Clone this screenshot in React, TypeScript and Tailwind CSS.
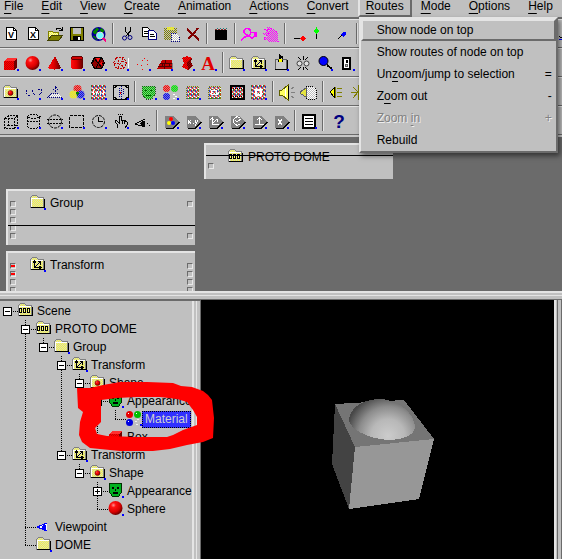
import React from "react";

const BLACK = "#000";
const NAVY = "#000080";

/* ---------- shared dither patterns ---------- */

function Dither({ id, a, b }: { id: string; a: string; b: string }) {
  return (
    <pattern id={id} width="2" height="2" patternUnits="userSpaceOnUse">
      <rect width="2" height="2" fill={a} />
      <rect width="1" height="1" fill={b} />
      <rect x="1" y="1" width="1" height="1" fill={b} />
    </pattern>
  );
}

function SharedDefs() {
  return (
    <svg width="0" height="0" className="absolute" aria-hidden="true">
      <defs>
        <Dither id="yw" a="#ffff30" b="#f0f0d0" />
        <Dither id="folder" a="#f8f840" b="#d8d8c0" />
        <Dither id="red" a="#ff0000" b="#c80000" />
        <Dither id="dred" a="#a00000" b="#600000" />
        <Dither id="redg" a="#ff0000" b="#d08080" />
        <Dither id="greeng" a="#00ff00" b="#70b070" />
        <Dither id="blueg" a="#0000ff" b="#8080c0" />
        <Dither id="yelg" a="#ffff00" b="#c8c880" />
        <Dither id="navyg" a="#000080" b="#c0c0c0" />
        <Dither id="magg" a="#ff00ff" b="#c0c0c0" />
        <Dither id="oliveg" a="#808000" b="#c0c0c0" />
        <Dither id="whiteg" a="#ffffff" b="#c0c0c0" />
        <Dither id="mask" a="#10a010" b="#70e070" />
        <pattern id="noise" width="4" height="4" patternUnits="userSpaceOnUse">
          <rect width="4" height="4" fill="#b8a8a8" />
          <rect width="1" height="2" fill="#f02020" />
          <rect x="1" y="1" width="1" height="2" fill="#2040c0" />
          <rect x="2" y="2" width="1" height="2" fill="#f03030" />
          <rect x="3" width="1" height="2" fill="#208040" />
          <rect x="2" width="1" height="1" fill="#ffffff" />
          <rect y="3" width="1" height="1" fill="#ffffff" />
        </pattern>
        <radialGradient id="ball" cx="0.35" cy="0.3" r="0.7">
          <stop offset="0" stopColor="#ff9090" />
          <stop offset="0.25" stopColor="#ff1010" />
          <stop offset="0.7" stopColor="#d80000" />
          <stop offset="1" stopColor="#700000" />
        </radialGradient>
        <linearGradient id="cyl" x1="0" x2="1" y1="0" y2="0">
          <stop offset="0" stopColor="#ff1010" />
          <stop offset="0.45" stopColor="#e00000" />
          <stop offset="1" stopColor="#600000" />
        </linearGradient>
      </defs>
    </svg>
  );
}

/* ---------- icon drawings, all on a 22 x 22 grid ---------- */

const dot = <rect x="17" y="17" width="2" height="2" fill="#0000ff" />;

function glyph(x: number, y: number, size: number, text: string, fill: string, serif = false) {
  return (
    <text
      x={x}
      y={y}
      fontSize={size}
      fontWeight="bold"
      textAnchor="middle"
      fill={fill}
      fontFamily={serif ? "Liberation Serif, serif" : "Liberation Sans, sans-serif"}
    >
      {text}
    </text>
  );
}

function page(letter: string) {
  return (
    <>
      <path d="M6.5 4.5H13.5L16.5 7.5V16.5H6.5Z" fill="#fff" stroke={BLACK} />
      <path d="M13.5 4.5V7.5H16.5" fill="none" stroke={BLACK} />
      {glyph(11, 15, 9, letter, BLACK)}
    </>
  );
}

function folder(inner?: React.ReactNode) {
  return (
    <>
      <path d="M3.5 16.5V6.5L5.5 4.5H9.5L11.5 6.5H16.5V16.5Z" fill="url(#folder)" stroke="#808080" />
      <path d="M4.500 16V7.500H16" stroke="#fff" fill="none" />
      <path d="M4 16.500H17.500V8" stroke={BLACK} fill="none" />
      {inner}
    </>
  );
}

const axes = (
  <path
    d="M7.5 8V14.5H14M6 9.5L7.5 7.5L9 9.5M12 13L14.5 14.5L12 16M8 14L13 9M10.5 8.5H13.5V11.5"
    stroke={BLACK}
    fill="none"
  />
);

const eggs = (
  <path
    d="M4.500 9.500H6.500V13.500H4.500ZM8.500 9.500H10.500V13.500H8.500ZM12.500 9.500H14.500V13.500H12.500Z"
    fill="#ffff80"
    stroke={BLACK}
  />
);

function tag(inner: React.ReactNode) {
  return (
    <>
      <path d="M5 6H13L19 12L13 18H5Z" fill="#808080" />
      <path d="M6 18.500H13L19.500 12" stroke={BLACK} fill="none" />
      {inner}
      {dot}
    </>
  );
}

const icons: Record<string, React.ReactNode> = {
  newV: page("V"),
  newX: page("X"),
  open: (
    <>
      <path d="M4.500 16.500V8.500H8.500L9.500 9.500H14.500V12" fill="url(#yw)" stroke="#808000" />
      <path d="M4 17L8 12H19L15 17Z" fill="#808000" stroke="#404000" />
      <path d="M12 6.500C14 4.500 16 4.500 18 7M18.500 4V7.500H15" stroke={BLACK} fill="none" />
    </>
  ),
  save: (
    <>
      <rect x="4.500" y="4.500" width="13" height="13" fill="#808000" stroke={BLACK} />
      <rect x="7" y="5" width="8" height="6" fill="#c0c0c0" />
      <rect x="7" y="13" width="8" height="4" fill={BLACK} />
      <rect x="12" y="14" width="2" height="3" fill="#fff" />
    </>
  ),
  globe: (
    <>
      <circle cx="10.500" cy="11" r="7" fill="#000090" />
      <path d="M5 9L8 5L11 6L9 9L7 12ZM13 5L16 8L15 10L12 8ZM5 13L8 14L9 17L6 15Z" fill="#008000" />
      <circle cx="12" cy="12.500" r="3.500" fill="#70ffff" stroke="#e0e0e0" />
      <path d="M14.500 15L18 18" stroke="#ff0080" strokeWidth="2" />
    </>
  ),
  cut: (
    <>
      <path d="M9.500 4V8L13 13M14.500 4V8L10 13" stroke={BLACK} fill="none" />
      <circle cx="8.500" cy="15" r="2" stroke={NAVY} fill="none" />
      <circle cx="14" cy="14.500" r="2" stroke={NAVY} fill="none" />
    </>
  ),
  copy: (
    <>
      <path d="M4.500 4.500H9.500L12.500 7.500V13.500H4.500Z" fill="#fff" stroke={BLACK} />
      <path d="M6 8.500H10M6 10.500H10" stroke={BLACK} />
      <path d="M10.500 7.500H15.500L18.500 10.500V16.500H10.500Z" fill="#fff" stroke={NAVY} />
      <path d="M12 11.500H16M12 13.500H17" stroke={BLACK} />
    </>
  ),
  paste: (
    <>
      <rect x="4" y="5" width="13" height="12" fill="url(#oliveg)" />
      <rect x="7" y="4" width="7" height="3" fill="url(#yelg)" />
      <path d="M11 10H16L19 13V18H11Z" fill="url(#whiteg)" stroke="url(#navyg)" />
    </>
  ),
  remove: <path d="M5 6L17 17M16 5L12 10L6 16" stroke="#800000" strokeWidth="2" fill="none" />,
  clapper: (
    <>
      <rect x="5" y="7" width="12" height="10" fill={BLACK} />
      <path d="M5 6.500H17" stroke="#803030" strokeDasharray="2 1" />
      <path d="M7 5.500H17" stroke="#208080" strokeDasharray="1 2" />
    </>
  ),
  route: (
    <path
      d="M3 17L7 14C12 13 14 10 12 7C10 4 5 6 6 9C7 12 12 13 14 15C16 15 17 12 17 9M14 9.500H18V14"
      stroke="#ff00ff"
      strokeWidth="1.500"
      fill="none"
    />
  ),
  hand: (
    <path
      d="M7 4L13 6L17 9L18 18H8L4 16V14H9L3 11V10L9 11L4 7L5 6L10 9L7 5Z"
      fill="url(#magg)"
      stroke="#ff00ff"
      strokeDasharray="1 1"
    />
  ),
  arrowRed: (
    <>
      <path d="M6 15.500H13" stroke={BLACK} />
      <path d="M12 15.500L15 13L18 15.500L15 18Z" fill="#ff0000" />
    </>
  ),
  arrowGreen: (
    <>
      <path d="M6.500 9V16" stroke={BLACK} />
      <path d="M6.500 4L9 8L6.500 11L4 8Z" fill="#00ff00" />
    </>
  ),
  arrowBlue: (
    <>
      <path d="M6 16L10 12" stroke={BLACK} />
      <path d="M9 12L11 9H14V12L11 14Z" fill="#0000ff" />
    </>
  ),
  cube: (
    <>
      <path d="M4 9L7 6H17L14 9Z" fill="#ff3030" />
      <rect x="4" y="9" width="10" height="9" fill="url(#red)" />
      <path d="M14 9L17 6V15L14 18Z" fill="#700000" />
      {dot}
    </>
  ),
  sphere: (
    <>
      <circle cx="10.500" cy="11" r="7" fill="url(#ball)" />
      {dot}
    </>
  ),
  cone: (
    <>
      <path d="M11 4L17 16C14 18 7 18 4 16Z" fill="url(#cyl)" />
      {dot}
    </>
  ),
  cylinder: (
    <>
      <path d="M5 6V16C7 18 15 18 17 16V6Z" fill="url(#cyl)" />
      <ellipse cx="11" cy="6" rx="6" ry="2" fill="#d00000" stroke="#600000" />
      {dot}
    </>
  ),
  ifs: (
    <>
      <path d="M3.500 11L6.500 5.500H13.500L16.500 11L13.500 16.500H6.500Z" fill="#900000" stroke={BLACK} />
      <path d="M6 6L14 16M13 6L8 16M6 8L4 11M13 12L16 11" stroke={BLACK} fill="none" />
      <path d="M8 6H12L10 10ZM12 11L14 14V9Z" fill="#ff1010" />
      {dot}
    </>
  ),
  ils: (
    <>
      <path
        d="M3.500 11L6.500 5.500H13.500L16.500 11L13.500 16.500H6.500ZM6 6L14 16M13 6L8 16M4 11L9 12M12 9L16 11"
        fill="none"
        stroke="#c00000"
        strokeDasharray="2 1"
      />
      <path d="M18.500 6V16" stroke="#fff" />
      {dot}
    </>
  ),
  points: (
    <>
      <path d="M5 12h1v1h-1zM10 8h1v1h-1zM15 8h1v1h-1zM9 13h1v1h-1zM15 12h1v1h-1zM10 17h1v1h-1zM12 6h1v1h-1z" fill="#ff0000" />
      {dot}
    </>
  ),
  wall: (
    <>
      <path d="M3 17L8 8H18V17Z" fill="#c00000" />
      <path d="M6 11.500H18M4 14.500H18M11.500 8L10 17M15.500 11V14M8 12V14" stroke="#500000" fill="none" />
      <path d="M18.500 11V17" stroke="#808080" />
      {dot}
    </>
  ),
  extrusion: (
    <>
      <path d="M6 6L11 4L16 6L15 10L17 14L12 18L6 15L8 11Z" fill="url(#red)" />
      <path d="M11 10L16 6L15 10L17 14L12 18Z" fill="url(#dred)" />
      {dot}
    </>
  ),
  text: (
    <>
      {glyph(10, 18, 19, "A", "#e00000", true)}
      {dot}
    </>
  ),
  folder: (
    <>
      {folder()}
      {dot}
    </>
  ),
  transform: (
    <>
      {folder(axes)}
      {dot}
    </>
  ),
  scene: folder(eggs),
  shape: (
    <>
      {folder(<circle cx="10.500" cy="12" r="2.500" fill="url(#ball)" stroke="#600000" strokeWidth="0.500" />)}
      {dot}
    </>
  ),
  anchor: (
    <>
      <path d="M5.500 17.500V7.500H16.500V17.500Z" fill="#c8c8c8" stroke="#606060" />
      <path d="M5 17.500H17.500V8" stroke={BLACK} fill="none" />
      <path d="M10 8V4L13 6M8 9H13" stroke={BLACK} fill="none" strokeWidth="2" />
      <path d="M9 7H12V10H9Z" fill="#ffff00" />
      {dot}
    </>
  ),
  billboard: (
    <>
      <circle cx="7.500" cy="11.500" r="2.500" stroke="#404040" fill="#e0e0e0" />
      <circle cx="14.500" cy="11.500" r="2.500" stroke="#404040" fill="#e0e0e0" />
      <path d="M6 5L9 8M11.500 4V8M16 5L13 8M6 18L9 15M11.500 15V18M16 18L13 15" stroke={BLACK} />
    </>
  ),
  magnifier: (
    <>
      <circle cx="9.500" cy="9" r="4.500" fill="#0000ff" stroke={BLACK} />
      <path d="M13 13L18 17" stroke={BLACK} strokeWidth="2" />
      {dot}
    </>
  ),
  switcher: (
    <>
      <rect x="7" y="6" width="7" height="11" fill="#fff" stroke={BLACK} strokeWidth="2" />
      <rect x="10" y="8" width="2" height="3" fill={BLACK} />
      <rect x="9.500" y="12.500" width="2" height="2" fill="#c0c0c0" stroke="#606060" />
      {dot}
    </>
  ),
  path: (
    <>
      <path d="M4 9V13M6 14H9M10 9L12 13L14 13M16 8H19V12L17 14" stroke={NAVY} strokeDasharray="2 1" fill="none" />
      {dot}
    </>
  ),
  normal: (
    <>
      <path d="M4 16L8 12H14L18 16Z" fill="url(#whiteg)" stroke="url(#navyg)" />
      <path d="M11.500 6V13M9 9L11.500 6L14 9" stroke={NAVY} fill="none" strokeDasharray="2 1" />
      {dot}
    </>
  ),
  colors: (
    <>
      <circle cx="11.500" cy="8" r="4" fill="url(#redg)" />
      <circle cx="7.500" cy="13.500" r="4" fill="url(#yelg)" />
      <circle cx="14.500" cy="13.500" r="4" fill="url(#blueg)" />
      <path d="M10 11H13L12 15H11Z" fill="#008000" />
      {dot}
    </>
  ),
  texcoord: (
    <>
      <rect x="3" y="4" width="15" height="15" fill="url(#noise)" />
      <path d="M5 9V14M8 14L10 10M12 10V14M15 9V14" stroke="#fff" />
      {dot}
    </>
  ),
  coordframe: (
    <>
      <rect x="3.500" y="4.500" width="15" height="14" fill="#c8c8c8" stroke={BLACK} />
      <path d="M4 7L7 5M18 7L15 5M4 16L7 18M18 16L15 18" stroke={BLACK} />
      <path d="M11.500 5V18M9.500 7V16M13.500 8V14" stroke={NAVY} strokeDasharray="1 1" />
      <rect x="10" y="11" width="1" height="2" fill="#ff0000" />
      {dot}
    </>
  ),
  mask: (
    <>
      <path d="M4 5H17V13L14 18H8L4 14Z" fill="url(#mask)" stroke="#205020" strokeDasharray="1 1" />
      <path d="M7 9H9M12 9H14M8 14H13" stroke="#006000" />
      {dot}
    </>
  ),
  material: (
    <>
      <circle cx="6.500" cy="7.500" r="3.500" fill="url(#redg)" />
      <circle cx="14.500" cy="7.500" r="3.500" fill="url(#greeng)" />
      <circle cx="6.500" cy="15.500" r="3.500" fill="url(#blueg)" />
      <path d="M13 13.500H15M15 15.500H17M13 17.500H15" stroke="#fff" />
      {dot}
    </>
  ),
  image: (
    <>
      <rect x="4.500" y="5.500" width="12" height="12" fill="url(#noise)" stroke="#808000" strokeDasharray="1 1" />
      {dot}
    </>
  ),
  pixel: (
    <>
      <rect x="4.500" y="5.500" width="12" height="12" fill="url(#noise)" stroke="#808000" strokeDasharray="1 1" />
      <path d="M7 9.500H12V13.500H7ZM13 14L15 11" stroke="#fff" fill="none" />
    </>
  ),
  movie: (
    <>
      <rect x="5" y="5" width="13" height="13" fill="url(#noise)" stroke={BLACK} strokeWidth="2" />
      <path d="M5 7.500H17M5 15.500H17" stroke={BLACK} strokeDasharray="1 1" />
    </>
  ),
  textransform: (
    <>
      <rect x="3" y="4" width="15" height="15" fill="url(#noise)" />
      <path d="M8 8V14H14M9 9H13V13" stroke="#fff" fill="none" strokeWidth="2" />
      {dot}
    </>
  ),
  sound: (
    <>
      <path d="M3 9H6L12 4V19L6 14H3Z" fill="#ffff60" stroke="#606000" />
      <path d="M9.500 7V16" stroke="#fff" />
      <path d="M12.500 5V18" stroke={BLACK} />
      <path d="M15 8L18 6M15 11.500H19M15 15L18 17" stroke="#808080" />
    </>
  ),
  audio: (
    <>
      <path d="M8 5H15L18 8V18H9Z" fill="url(#whiteg)" stroke={BLACK} strokeDasharray="1 1" />
      <path d="M2 11L8 7V16L3 13Z" fill="url(#yelg)" stroke="#606060" />
    </>
  ),
  light: (
    <>
      <path d="M4 11L8 7V16Z" fill="#ffff00" stroke={BLACK} />
      <path d="M11 7.500H16M11 11.500H16M11 15.500H16M9.500 6V17" stroke="#808000" />
    </>
  ),
  pointlight: <path d="M3 11.500H10M5 6L10 11L5 17M10 4V19" stroke="#808000" fill="none" />,
  visibility: (
    <>
      <path
        d="M4.500 8.500H14.500V18.500H4.500ZM4.500 8.500L8.500 5.500H17.500L14.500 8.500M17.500 5.500V15L14.500 18M8.500 5V15H17M8 15L5 18"
        fill="none"
        stroke={BLACK}
        strokeDasharray="2 1"
      />
      {dot}
    </>
  ),
  cylSensor: (
    <>
      <path
        d="M5.500 7V16M17.500 7V16M5 6.500C8 4 15 4 18 6.500C15 9 8 9 5 6.500M5 10.500C8 12 15 12 18 10.500M5 16.500C8 19 15 19 18 16.500"
        fill="none"
        stroke={BLACK}
        strokeDasharray="2 1"
      />
      {dot}
    </>
  ),
  sphSensor: (
    <>
      <circle cx="11" cy="11.500" r="6.500" fill="none" stroke={BLACK} strokeDasharray="3 1" />
      <path d="M3 9.500H19M3 13.500H19" stroke={BLACK} strokeDasharray="2 1" />
      {dot}
    </>
  ),
  plane: (
    <>
      <rect x="3.500" y="5.500" width="14" height="12" fill="none" stroke={BLACK} strokeDasharray="3 1" />
      {dot}
    </>
  ),
  clock: (
    <>
      <circle cx="10.500" cy="11.500" r="6" fill="none" stroke={BLACK} strokeDasharray="3 1" />
      <path d="M10.500 7V11.500H15" stroke={BLACK} fill="none" />
      {dot}
    </>
  ),
  touch: (
    <>
      <path d="M7 18V14L5 12L6 10L9 13V6H11V11L14 10L17 12V15L15 18M12 11V14M14 11V14" fill="none" stroke={BLACK} />
      <path d="M8 5L10 4L13 5" stroke={BLACK} fill="none" strokeDasharray="1 1" />
      {dot}
    </>
  ),
  eye: (
    <>
      <path d="M3 14L13 9M3 14L13 17" stroke={BLACK} fill="none" />
      <path d="M10 11H13V16H10L8 14Z" fill={BLACK} />
      <path d="M15 13h1v1h-1zM17 15h1v1h-1z" fill={BLACK} />
    </>
  ),
  interpColor: tag(
    <>
      <circle cx="11" cy="9" r="2" fill="#ff0000" />
      <circle cx="9" cy="13" r="2" fill="#ffff00" />
      <circle cx="13" cy="13" r="2" fill="#0000ff" />
    </>,
  ),
  interpXy: tag(<path d="M6 10L9 14M9 10L6 14M11 14V13M13 10L14 13M16 10L13 16" stroke="#fff" fill="none" />),
  interpAxes: tag(<path d="M8.500 8V14.500H15M9 13L13 9M6 10L8.500 8L10 10M13 9V12" stroke="#fff" fill="none" />),
  interpRot: tag(<path d="M14 8A4 4 0 1 0 14 14M9 10L11 12L15 9" stroke="#fff" fill="none" />),
  interpNormal: tag(<path d="M7 14.500H16M11.500 14V8M9 10L11.500 8L14 10" stroke="#fff" fill="none" />),
  interpScalar: tag(<path d="M8 9L12 15M12 9L8 15" stroke="#fff" />),
  script: (
    <>
      <rect x="5" y="5" width="12" height="13" fill="#fff" stroke={BLACK} strokeWidth="2" />
      <path d="M7 8.500H15M7 11.500H15M7 14.500H15" stroke={BLACK} />
      {dot}
    </>
  ),
  help: glyph(13, 18, 19, "?", NAVY),
  treeMask: (
    <>
      <path d="M4.500 4.500H16.500V13L13.500 17.500H7.500L4.500 13Z" fill="#00b020" stroke="#003000" />
      <path d="M7 8H9V10H7ZM12 8H14V10H12ZM10 10H11V12H10ZM8 13H13V15H8Z" fill={BLACK} />
      {dot}
    </>
  ),
  treeMaterial: (
    <>
      <circle cx="6.500" cy="7.500" r="3.500" fill="#e80000" />
      <circle cx="14.500" cy="7.500" r="3.500" fill="#00c000" />
      <circle cx="6.500" cy="15.500" r="3.500" fill="#0000e0" />
      <path d="M5 6h1v1h-1zM13 6h1v1h-1zM5 14h1v1h-1z" fill="#fff" />
      <path d="M12 14.500H14M14 12.500H16M13 17.500H15" stroke="#f0f0f0" />
      {dot}
    </>
  ),
  viewpoint: (
    <>
      <path d="M4 12L14 8V16Z" fill="#fff" />
      <path d="M4 12L14 8M4 12L14 16" stroke="#0000ff" fill="none" />
      <path d="M10 10H13V15H10L9 12Z" fill="#0000ff" />
    </>
  ),
};

function Drawing({ name, className }: { name: string; className: string }) {
  return (
    <svg
      viewBox="0 0 22 22"
      className={"[&_circle]:[shape-rendering:auto] " + className}
      shapeRendering="crispEdges"
      aria-hidden="true"
    >
      {icons[name]}
    </svg>
  );
}

/* ---------- tool bars ---------- */

const toolbars: string[][] = [
  ["newV", "newX", "open", "save", "globe", "|", "cut", "copy", "paste", "remove", "|", "clapper", "|", "route", "hand", "|", "arrowRed", "arrowGreen", "arrowBlue", "|", "edge"],
  ["cube", "sphere", "cone", "cylinder", "ifs", "ils", "points", "wall", "extrusion", "text", "|", "folder", "transform", "anchor", "billboard", "magnifier", "switcher"],
  ["shape", "path", "normal", "colors", "texcoord", "coordframe", "|", "mask", "material", "image", "pixel", "movie", "textransform", "|", "sound", "audio", "|", "light", "pointlight"],
  ["visibility", "cylSensor", "sphSensor", "plane", "clock", "touch", "eye", "|", "interpColor", "interpXy", "interpAxes", "interpRot", "interpNormal", "interpScalar", "|", "script", "|", "help"],
];

function Toolbar({ items }: { items: string[] }) {
  return (
    <div role="toolbar" className="flex h-[29px] items-center overflow-hidden border-b border-t border-b-[#6b6b6b] border-t-[#e4e4e4]">
      {items.map((name, i) => {
        if (name === "|") {
          return (
            <span key={i} className="flex w-[6px] shrink-0 justify-center">
              <span className="h-[21px] w-[2px] border-l border-r border-l-[#6b6b6b] border-r-[#e4e4e4]" />
            </span>
          );
        }
        if (name === "edge") {
          return (
            <svg key={i} viewBox="0 0 3 22" className="ml-auto h-[22px] w-[3px]" shapeRendering="crispEdges" aria-hidden="true">
              <path d="M0 13.500H1M1 14.500H3" stroke={BLACK} />
              <path d="M0 16.500H3" stroke="#0000ff" />
            </svg>
          );
        }
        return (
          <button key={i} type="button" aria-label={name} className="size-[22px] shrink-0">
            <Drawing name={name} className="size-[22px]" />
          </button>
        );
      })}
    </div>
  );
}

/* ---------- menu ---------- */

function Mnemonic({ text, at }: { text: string; at: number }) {
  if (at < 0) return <>{text}</>;
  return (
    <>
      {text.slice(0, at)}
      <span className="underline underline-offset-[3px]">{text[at]}</span>
      {text.slice(at + 1)}
    </>
  );
}

const routeItems = [
  { label: "Show node on top", at: -1, key: "" },
  { label: "Show routes of node on top", at: -1, key: "" },
  { label: "Unzoom/jump to selection", at: 2, key: "=" },
  { label: "Zoom out", at: 1, key: "-" },
  { label: "Zoom in", at: 5, key: "+", disabled: true },
  { label: "Rebuild", at: -1, key: "" },
];

function RoutesMenu() {
  return (
    <div
      role="menu"
      className="absolute left-px top-full z-20 w-[199px] border-2 border-b-[#6b6b6b] border-l-[#e4e4e4] border-r-[#6b6b6b] border-t-[#e4e4e4] bg-[#c0c0c0] shadow-[2px_3px_5px_rgba(0,0,0,0.5)]"
    >
      {routeItems.map((item, i) => (
        <button
          key={item.label}
          type="button"
          role="menuitem"
          disabled={item.disabled}
          className={
            "flex h-[22px] w-full items-center justify-between border-2 pl-[14px] pr-[2px] text-left " +
            (i === 0
              ? "border-b-[#6b6b6b] border-l-[#e4e4e4] border-r-[#6b6b6b] border-t-[#e4e4e4] "
              : "border-transparent ") +
            (item.disabled ? "text-[#808080] [text-shadow:1px_1px_0_#eee]" : "text-black")
          }
        >
          <span>
            <Mnemonic text={item.label} at={item.at} />
          </span>
          <span>{item.key}</span>
        </button>
      ))}
    </div>
  );
}

function MenuBar() {
  const names = ["File", "Edit", "View", "Create", "Animation", "Actions", "Convert", "Routes", "Mode", "Options", "Help"];
  return (
    <nav className="flex h-[19px] gap-[18px] whitespace-nowrap border-b-2 border-[#6b6b6b] pl-1 leading-[13px]">
      {names.map((name) =>
        name === "Routes" ? (
          <div key={name} className="relative -mx-[9px] h-[17px]">
            <button
              type="button"
              aria-expanded="true"
              className="h-[17px] border-b-2 border-l-2 border-r-2 border-b-[#6b6b6b] border-l-[#e4e4e4] border-r-[#6b6b6b] px-[6px] pb-[2px]"
            >
              <Mnemonic text={name} at={0} />
            </button>
            <RoutesMenu />
          </div>
        ) : (
          <button key={name} type="button" className="h-[17px] pb-1">
            <Mnemonic text={name} at={0} />
          </button>
        ),
      )}
    </nav>
  );
}

/* ---------- route canvas ---------- */

/* "o" is an empty port, "r" a connected one and "." a gap. */
function Ports({ kinds }: { kinds: string }) {
  return (
    <div className="flex flex-col gap-[2px]">
      {kinds.split("").map((k, i) =>
        k === "." ? (
          <span key={i} className="size-[6px]" />
        ) : (
          <span
            key={i}
            className="flex size-[6px] items-center border border-b-[#e8e8e8] border-l-[#6b6b6b] border-r-[#e8e8e8] border-t-[#6b6b6b]"
          >
            {k === "r" && <span className="h-[2px] w-full bg-[#ff0000]" />}
          </span>
        ),
      )}
    </div>
  );
}

function RouteNode(props: {
  place: string;
  icon: string;
  label: string;
  left: string;
  right: string;
  line?: string;
}) {
  return (
    <section
      className={
        "absolute flex w-[189px] items-start justify-between overflow-hidden border-l-2 border-t-2 border-[#e4e4e4] bg-[#c0c0c0] px-[2px] pt-[10px] " +
        props.place
      }
    >
      <Ports kinds={props.left} />
      <h2 className="-mt-2 ml-[11px] flex flex-1 items-center">
        <Drawing name={props.icon} className="-mt-[2px] size-[22px]" />
        <span className="ml-px">{props.label}</span>
      </h2>
      <Ports kinds={props.right} />
      {props.line && <span className={"absolute inset-x-0 h-px bg-black " + props.line} />}
    </section>
  );
}

function RouteCanvas() {
  return (
    <main className="relative h-[154px] shrink-0 overflow-hidden bg-[#6b6b6b]">
      <RouteNode place="left-[204px] top-[6px] h-[36px]" icon="scene" label="PROTO DOME" left=".o" right="" line="top-[10px]" />
      <RouteNode place="left-[6px] top-[52px] h-[56px]" icon="folder" label="Group" left="ooooo" right="o...o" line="top-[34px]" />
      <RouteNode place="left-[6px] top-[114px] h-[56px]" icon="transform" label="Transform" left="rroo" right="oooo" />
    </main>
  );
}

/* ---------- scene tree ---------- */

/* One guide character per level: space, | line, T branch, L corner,
   0 root box, - open box in a branch, _ open box at the end, + closed box. */
const tree = [
  { guides: "0", icon: "scene", label: "Scene" },
  { guides: " -", icon: "scene", label: "PROTO DOME" },
  { guides: " |_", icon: "folder", label: "Group" },
  { guides: " | -", icon: "transform", label: "Transform" },
  { guides: " | |_", icon: "shape", label: "Shape" },
  { guides: " | | -", icon: "treeMask", label: "Appearance" },
  { guides: " | | |L", icon: "treeMaterial", label: "Material", selected: true },
  { guides: " | | L", icon: "cube", label: "Box" },
  { guides: " | _", icon: "transform", label: "Transform" },
  { guides: " |  _", icon: "shape", label: "Shape" },
  { guides: " |   +", icon: "treeMask", label: "Appearance" },
  { guides: " |   L", icon: "sphere", label: "Sphere" },
  { guides: " T", icon: "viewpoint", label: "Viewpoint" },
  { guides: " L", icon: "folder", label: "DOME" },
];

function Guide({ kind }: { kind: string }) {
  const box = "0-_+".includes(kind);
  const up = "|TL-_+".includes(kind);
  const down = "|T-+".includes(kind);
  const across = kind !== " " && kind !== "|";
  const drawing = (
    <svg viewBox="0 0 18 18" className="size-[18px]" shapeRendering="crispEdges" aria-hidden="true">
      {up && <path d="M7.500 0V10" stroke={BLACK} strokeDasharray="1 1" />}
      {down && <path d="M7.500 10V18" stroke={BLACK} strokeDasharray="1 1" />}
      {across && <path d="M7 9.500H18" stroke={BLACK} strokeDasharray="1 1" />}
      {box && <rect x="3.500" y="5.500" width="8" height="8" fill="#fff" stroke={BLACK} />}
      {box && <path d="M5 9.500H10" stroke={BLACK} />}
      {kind === "+" && <path d="M7.500 7V12" stroke={BLACK} />}
    </svg>
  );
  return box ? (
    <button type="button" aria-label="Toggle branch" className="size-[18px] shrink-0">
      {drawing}
    </button>
  ) : (
    <span className="size-[18px] shrink-0">{drawing}</span>
  );
}

function SceneTree() {
  return (
    <ul role="tree" className="w-[192px] shrink-0 overflow-hidden whitespace-nowrap pt-[1px]">
      {tree.map((row, i) => (
        <li key={i} role="treeitem" className="flex h-[18px] items-center">
          {row.guides.split("").map((kind, d) => (
            <Guide key={d} kind={kind} />
          ))}
          <Drawing name={row.icon} className="-mx-[3px] -mt-[2px] size-[22px] shrink-0" />
          <span
            className={
              "px-[3px] leading-[17px] " +
              (row.selected ? "bg-[#3030ff] text-[#d0d0d0] outline-1 -outline-offset-1 outline-dotted outline-black" : "")
            }
          >
            {row.label}
          </span>
        </li>
      ))}
    </ul>
  );
}

/* ---------- 3D preview ---------- */

function Preview() {
  return (
    <div className="min-w-0 flex-1 overflow-hidden bg-black">
      <svg viewBox="201 300 353 259" className="h-[259px] w-[353px]" shapeRendering="crispEdges" role="img" aria-label="Box with a dome">
        <defs>
          <radialGradient id="dome" gradientUnits="userSpaceOnUse" cx="388" cy="436" r="42">
            <stop offset="0" stopColor="#cccccc" />
            <stop offset="0.4" stopColor="#b8b8b8" />
            <stop offset="0.7" stopColor="#8c8c8c" />
            <stop offset="1" stopColor="#484848" />
          </radialGradient>
        </defs>
        <path d="M335 404L404 400L434 439L355 447Z" fill="#757575" />
        <path d="M335 404L355 447L349 509L332 464Z" fill="#434343" />
        <path d="M355 447L434 439L419 499L349 509Z" fill="#979797" />
        <path
          d="M349 418C352 405 366 399 381 399C399 400 414 413 415 427C414 436 402 440 387 440C367 438 348 429 349 418Z"
          fill="url(#dome)"
        />
      </svg>
    </div>
  );
}

function Scribble() {
  return (
    <svg viewBox="77 381 138 71" className="pointer-events-none absolute left-[77px] top-[81px] z-10 h-[71px] w-[138px]" aria-hidden="true">
      <path
        fillRule="evenodd"
        fill="#ff0000"
        d="M77 388L90 388L103 385L120 382L147 382L173 383L181 386L192 387L203 391L208 395L212 400L214 418L213 438L203 442L187 445L170 449L153 451L120 451L90 448L82 442L79 435L80 422L83 412L78 408Z
           M101 400L117 398L137 397L160 397L177 399L187 402L193 410L197 417L197 425L183 430L173 435L167 437L137 437L107 436L97 434L95 428L101 422Z"
      />
    </svg>
  );
}

export default function App() {
  return (
    <div className="flex h-screen flex-col overflow-hidden bg-[#c0c0c0] font-['Liberation_Sans',Arial,sans-serif] text-[12px] text-black">
      <SharedDefs />
      <header className="shrink-0">
        <MenuBar />
        {toolbars.map((items, i) => (
          <Toolbar key={i} items={items} />
        ))}
        <div className="h-[2px] bg-[#c8c8c8]" />
      </header>
      <RouteCanvas />
      <div className="h-[9px] shrink-0 border-b border-t-2 border-b-[#6b6b6b] border-t-[#e4e4e4] pt-[2px]">
        <div className="h-px bg-[#e4e4e4]" />
      </div>
      <div className="relative flex min-h-0 flex-1">
        <div className="flex w-[201px] shrink-0 border-t border-[#6b6b6b]">
          <SceneTree />
          <div className="flex flex-1 border-l-2 border-r border-l-[#e4e4e4] border-r-[#6b6b6b] pl-[2px]">
            <span className="w-px bg-[#e4e4e4]" />
          </div>
        </div>
        <Preview />
        <div className="flex w-[8px] shrink-0 justify-between border-l-2 border-r border-l-[#e4e4e4] border-r-[#6b6b6b] pl-[1px]">
          <span className="w-px bg-[#6b6b6b]" />
        </div>
        <Scribble />
      </div>
    </div>
  );
}
